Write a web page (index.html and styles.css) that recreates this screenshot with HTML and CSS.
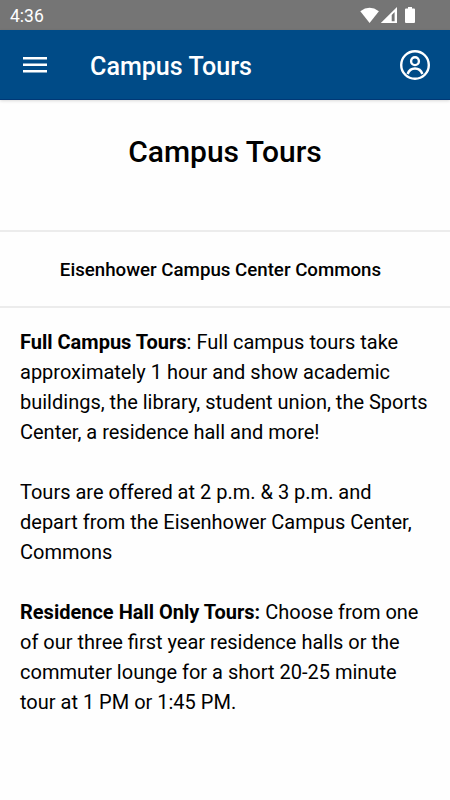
FILE: index.html
```html
<!DOCTYPE html>
<html lang="en">

<head>
    <meta charset="UTF-8">
    <meta name="viewport" content="width=device-width, initial-scale=1.0">
    <title>Campus Tours</title>
    <link rel="stylesheet" href="styles.css">
</head>

<body>
    <div class="status-bar">
        <span class="time">4:36</span>
        <svg class="status-icons" width="56" height="18" viewBox="0 0 56 18" fill="#fff">
            <path d="M0.3 4.2Q9.5-2.6 18.9 4.2L9.6 16Z" />
            <path fill-rule="evenodd" d="M20.8 16L37 0V16ZM31.7 14.2H34.6V5L31.7 7.9Z" />
            <path d="M48 0H52V1.5H54Q55 1.5 55 2.5V15Q55 16 54 16H46Q45 16 45 15V2.5Q45 1.5 46 1.5H48Z" />
        </svg>
    </div>

    <header>
        <button class="icon-button" type="button" aria-label="Menu">
            <svg width="24" height="18" viewBox="0 0 24 18" fill="#fff">
                <path d="M0 1H24V3.5H0ZM0 7.5H24V10H0ZM0 14H24V16.5H0Z" />
            </svg>
        </button>
        <h1>Campus Tours</h1>
        <button class="icon-button" type="button" aria-label="Account">
            <svg width="30" height="30" viewBox="0 0 30 30" fill="none" stroke="#fff" stroke-width="2.4">
                <circle cx="15" cy="15" r="13.8" />
                <circle cx="15" cy="11.2" r="3.9" />
                <path d="M7.6 24C9 20 11.5 18.5 15 18.5S21 20 22.4 24" />
            </svg>
        </button>
    </header>

    <main>
        <h2>Campus Tours</h2>

        <section class="location">
            <h3>Eisenhower Campus Center Commons</h3>
        </section>

        <section class="details">
            <p><strong>Full Campus Tours</strong>: Full campus tours take approximately 1 hour and show academic buildings, the library, student union, the Sports Center, a residence hall and more!</p>
            <p>Tours are offered at 2 p.m. &amp; 3 p.m. and depart from the Eisenhower Campus Center, Commons</p>
            <p><strong>Residence Hall Only Tours:</strong> Choose from one of our three first year residence halls or the commuter lounge for a short 20-25 minute tour at 1 PM or 1:45 PM.</p>
        </section>
    </main>
</body>

</html>
```

FILE: styles.css
```css
/* General Styles */
* {
    box-sizing: border-box;
}

body {
    font-family: Roboto, sans-serif;
    margin: 0;
    min-height: 800px;
    background-color: #fefefe;
    color: #000;
}

/* Status Bar */
.status-bar {
    display: flex;
    align-items: center;
    justify-content: space-between;
    height: 30px;
    padding: 2px 34px 0 10px;
    background-color: #757575;
    color: #fff;
}

.time {
    font-size: 17.5px;
    line-height: 28px;
}

/* Header */
header {
    display: flex;
    align-items: center;
    height: 70px;
    padding: 0 20px 0 23px;
    background-color: #004b87;
    border-bottom: 1px solid #003876;
    box-shadow: 0 1px 3px rgba(0, 0, 0, 0.15);
    color: #fff;
}

header h1 {
    flex: 1;
    margin: 4px 0 0 43px;
    font-size: 25.1px;
    font-weight: 500;
    line-height: 30px;
}

.icon-button {
    display: flex;
    padding: 0;
    background: none;
    border: none;
    cursor: pointer;
}

/* Page Title */
h2 {
    margin: 0;
    padding: 32px 0 58px;
    font-size: 30px;
    font-weight: 500;
    line-height: 40px;
    text-align: center;
}

/* Location */
.location {
    padding: 24px 20px 22px;
    border-top: 2px solid #ececec;
    border-bottom: 2px solid #ececec;
}

.location h3 {
    margin: 0;
    padding-right: 9px;
    font-size: 18.7px;
    font-weight: 500;
    line-height: 28px;
    text-align: center;
}

/* Tour Details */
.details {
    padding: 19px 20px;
    font-size: 20px;
    line-height: 30px;
}

.details p {
    margin: 0 0 30px;
}
```
